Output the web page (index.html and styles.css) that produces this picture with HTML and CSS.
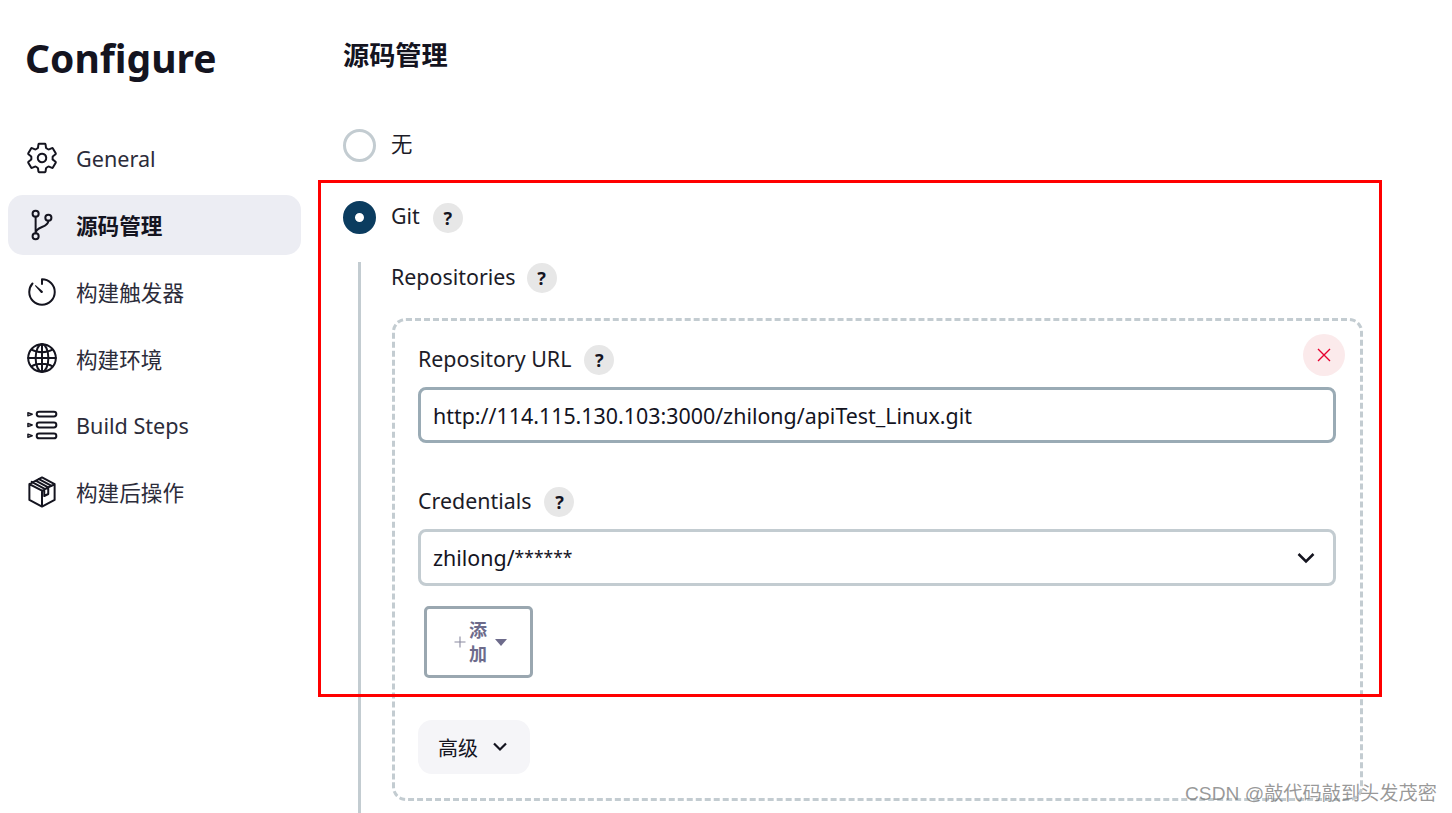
FILE: index.html
```html
<!DOCTYPE html>
<html lang="zh">
<head>
<meta charset="utf-8">
<title>Configure</title>
<link rel="stylesheet" href="styles.css">
</head>
<body>
<div class="page">
  <aside class="sidebar">
    <h1 class="title">Configure</h1>
    <nav class="nav">
      <a class="nav-item"><svg class="nav-icon" viewBox="0 0 512 512"><path class="st" d="M262.29 192.31a64 64 0 1057.4 57.4 64.13 64.13 0 00-57.4-57.4zM416.39 256a154.34 154.34 0 01-1.53 20.79l45.21 35.46a10.81 10.81 0 012.45 13.75l-42.77 74a10.81 10.81 0 01-13.14 4.59l-44.9-18.08a16.11 16.11 0 00-15.17 1.75A164.48 164.48 0 01325 400.8a15.94 15.94 0 00-8.82 12.14l-6.73 47.89a11.08 11.08 0 01-10.68 9.17h-85.54a11.11 11.11 0 01-10.69-8.87l-6.72-47.82a16.07 16.07 0 00-9-12.22 155.3 155.3 0 01-21.46-12.57 16 16 0 00-15.11-1.71l-44.89 18.07a10.81 10.81 0 01-13.14-4.58l-42.77-74a10.8 10.8 0 012.45-13.75l38.21-30a16.05 16.05 0 006-14.08c-.36-4.17-.58-8.33-.58-12.5s.21-8.27.58-12.35a16 16 0 00-6.07-13.94l-38.19-30A10.81 10.81 0 0149.48 186l42.77-74a10.81 10.81 0 0113.14-4.59l44.9 18.08a16.11 16.11 0 0015.17-1.75A164.48 164.48 0 01187 111.2a15.94 15.94 0 008.82-12.14l6.73-47.89A11.08 11.08 0 01213.23 42h85.54a11.11 11.11 0 0110.69 8.87l6.72 47.82a16.07 16.07 0 009 12.22 155.3 155.3 0 0121.46 12.57 16 16 0 0015.11 1.71l44.89-18.07a10.81 10.81 0 0113.14 4.58l42.77 74a10.8 10.8 0 01-2.45 13.75l-38.21 30a16.05 16.05 0 00-6.05 14.08c.33 4.14.55 8.3.55 12.47z"/></svg><span>General</span></a>
      <a class="nav-item active"><svg class="nav-icon" viewBox="0 0 512 512"><circle class="st" cx="160" cy="86" r="46"/><circle class="st" cx="160" cy="426" r="46"/><circle class="st" cx="352" cy="146" r="46"/><path class="st" d="M160 132v248M352 192c0 112-192 76-192 188"/></svg><span>源码管理</span></a>
      <a class="nav-item"><svg class="nav-icon" viewBox="0 0 512 512"><path class="st" d="M112.91 128A191.85 191.85 0 0064 256c0 106 86 192 192 192s192-86 192-192S362 64 256 64v72"/><path class="fl" d="M268 244a20 20 0 01-26 26l-90-104a8 8 0 0111-11z"/></svg><span>构建触发器</span></a>
      <a class="nav-item"><svg class="nav-icon" viewBox="0 0 512 512"><circle class="st" cx="256" cy="256" r="208"/><ellipse class="st" cx="256" cy="256" rx="96" ry="208"/><path class="st" d="M256 48v416M48 256h416M96 128c40 26 96 40 160 40s120-14 160-40M96 384c40-26 96-40 160-40s120 14 160 40"/></svg><span>构建环境</span></a>
      <a class="nav-item"><svg class="nav-icon" viewBox="0 0 512 512"><rect class="st" x="176" y="56" width="296" height="72" rx="36"/><rect class="st" x="176" y="220" width="296" height="72" rx="36"/><rect class="st" x="176" y="384" width="296" height="72" rx="36"/><path class="st thin" d="M44 70l64 24-64 24zM44 232l64 24-64 24zM44 394l64 24-64 24z"/></svg><span>Build Steps</span></a>
      <a class="nav-item"><svg class="nav-icon" viewBox="0 0 512 512"><path class="st" d="M256 36l190 100v240L256 476 66 376V136zM66 136l190 100 190-100M256 236v240M160 86l190 100v100l-60 30V204L100 104"/><path class="st" d="M210 62l190 100"/></svg><span>构建后操作</span></a>
    </nav>
  </aside>
  <main class="main">
    <h2 class="section-title">源码管理</h2>
    <div class="radio-row first">
      <span class="radio"></span><span class="label">无</span>
    </div>
    <div class="radio-row second">
      <span class="radio checked"></span><span class="label">Git</span><span class="help">?</span>
    </div>
    <div class="nested">
      <div class="field-label top"><span class="label">Repositories</span><span class="help">?</span></div>
      <div class="repo-box">
        <button class="delete" type="button" aria-label="删除"><svg viewBox="0 0 16 16"><path d="M2 2l12 12M14 2L2 14"/></svg></button>
        <div class="field-label"><span class="label">Repository URL</span><span class="help">?</span></div>
        <div class="input">http://114.115.130.103:3000/zhilong/apiTest_Linux.git</div>
        <div class="field-label cred"><span class="label">Credentials</span><span class="help">?</span></div>
        <div class="input select"><span>zhilong/<span class="mask">******</span></span><svg class="chev" viewBox="0 0 18 12"><path d="M1.5 2l7.500 7.500L16.500 2"/></svg></div>
        <button class="add" type="button"><svg class="plus" viewBox="0 0 12 12"><path d="M6 .5v11M.5 6h11"/></svg><span class="add-text">添加</span><span class="caret"></span></button>
        <button class="advanced" type="button">高级<svg viewBox="0 0 18 12"><path d="M3 2.500l6 6 6-6"/></svg></button>
      </div>
    </div>
  </main>
</div>
<div class="highlight"></div>
<div class="watermark">CSDN @敲代码敲到头发茂密</div>
</body>
</html>
```
FILE: styles.css
```css
* { box-sizing: border-box; }
html, body { margin: 0; height: 813px; overflow: hidden; background: #fff; }
body {
  position: relative;
  font-family: "Noto Sans", "Noto Sans CJK SC", sans-serif;
  color: #14141f;
  font-size: 20px;
}
.page { display: flex; height: 813px; }
.sidebar { width: 301px; margin-left: 8px; flex: none; }
.title { margin: 0; padding: 32px 0 0 17px; height: 128px; font-size: 39px; line-height: 52px; font-weight: 700; color: #14141f; }
.nav { display: flex; flex-direction: column; gap: 6.8px; }
.nav-item { display: flex; align-items: center; gap: 17.5px; height: 60px; padding-left: 16.5px; border-radius: 15px; font-size: 21.6px; color: #2c2c3a; width: 293px; }
.nav-item.active { background: #ecedf3; font-weight: 700; color: #14141f; }
.nav-icon { width: 34px; height: 34px; flex: none; }
.st { fill: none; stroke: #14141f; stroke-width: 30; stroke-linecap: round; stroke-linejoin: round; }
.st.thin { stroke-width: 22; }
.fl { fill: #14141f; }

.main { margin-left: 34px; flex: 1; padding-right: 90px; }
.section-title { margin: 0; padding-top: 38px; height: 128px; font-size: 26.2px; line-height: 34px; font-weight: 700; }
.radio-row { display: flex; align-items: center; height: 34px; }
.radio-row.second { margin-top: 38px; }
.radio { width: 33px; height: 33px; border-radius: 50%; border: 3px solid #c3ccd1; flex: none; margin-right: 15px; background: #fff; }
.radio.checked { border: 12px solid #0b3c5f; background: #fff; }
.label { font-size: 21.4px; line-height: 28px; color: #1c1c28; }
.radio-row .label { margin-bottom: 2px; }
.help { display: inline-flex; align-items: center; justify-content: center; width: 30px; height: 30px; border-radius: 50%; background: #e7e7e7; font-size: 18px; font-weight: 700; margin-left: 13px; flex: none; color: #14141f; position: relative; top: 1px; }
.nested { margin: 28px 0 0 15px; border-left: 3px solid #c3ccd1; padding-left: 30px; height: 551px; }
.field-label { display: flex; align-items: center; height: 30px; }
.field-label.top { margin-bottom: 26px; }
.field-label.top .help { margin-left: 11px; }
.repo-box { position: relative; border: 3px dashed #c3ccd1; border-radius: 14px; width: 971px; height: 483px; padding: 23px 23px 0; margin-left: 1px; }
.delete { position: absolute; top: 13px; right: 15px; width: 42px; height: 42px; border: 0; border-radius: 50%; background: #fbeaeb; display: flex; align-items: center; justify-content: center; padding: 0; }
.delete svg { width: 16px; height: 16px; fill: none; stroke: #e6002e; stroke-width: 1.4; }
.input { margin-top: 13px; height: 56px; width: 918px; border: 3px solid #9aabb5; border-radius: 8px; padding-left: 12px; display: flex; align-items: center; font-size: 21.4px; color: #14141f; }
.cred { margin-top: 43px; }
.select { justify-content: space-between; padding-right: 18px; border-color: #c3ccd1; height: 57px; margin-top: 13px; }
.mask { font-size: 17.5px; vertical-align: 2px; }
.chev { width: 18px; height: 12px; fill: none; stroke: #14141f; stroke-width: 2.500; }
.add { display: flex; align-items: center; justify-content: center; margin: 20px 0 0 6px; width: 109px; height: 72px; border: 3px solid #9aa7b0; border-radius: 5px; background: #fff; color: #6d6b8b; padding: 0 0 0 4px; font-family: inherit; }
.plus { width: 12px; height: 12px; fill: none; stroke: #8a8aa0; stroke-width: 1.100; margin-right: 3px; }
.add-text { width: 18px; font-size: 18px; font-weight: 700; line-height: 24px; word-break: break-all; }
.caret { width: 0; height: 0; border-left: 6px solid transparent; border-right: 6px solid transparent; border-top: 7px solid #6d6b8b; margin-left: 8px; }
.advanced { display: flex; align-items: center; gap: 13px; margin-top: 42px; width: 112px; height: 54px; padding: 0 0 0 20px; border: 0; border-radius: 14px; background: #f5f5f8; font-family: inherit; font-size: 20px; color: #14141f; }
.advanced svg { width: 18px; height: 12px; fill: none; stroke: #14141f; stroke-width: 2.200; }

.highlight { position: absolute; left: 318px; top: 180px; width: 1064px; height: 517px; border: 3px solid #f00; pointer-events: none; }
.watermark { position: absolute; left: 1185px; top: 780px; font-family: "Liberation Sans", "Noto Sans CJK SC", sans-serif; font-size: 19.2px; line-height: 28px; color: rgba(120,120,120,.75); white-space: nowrap; }
```
